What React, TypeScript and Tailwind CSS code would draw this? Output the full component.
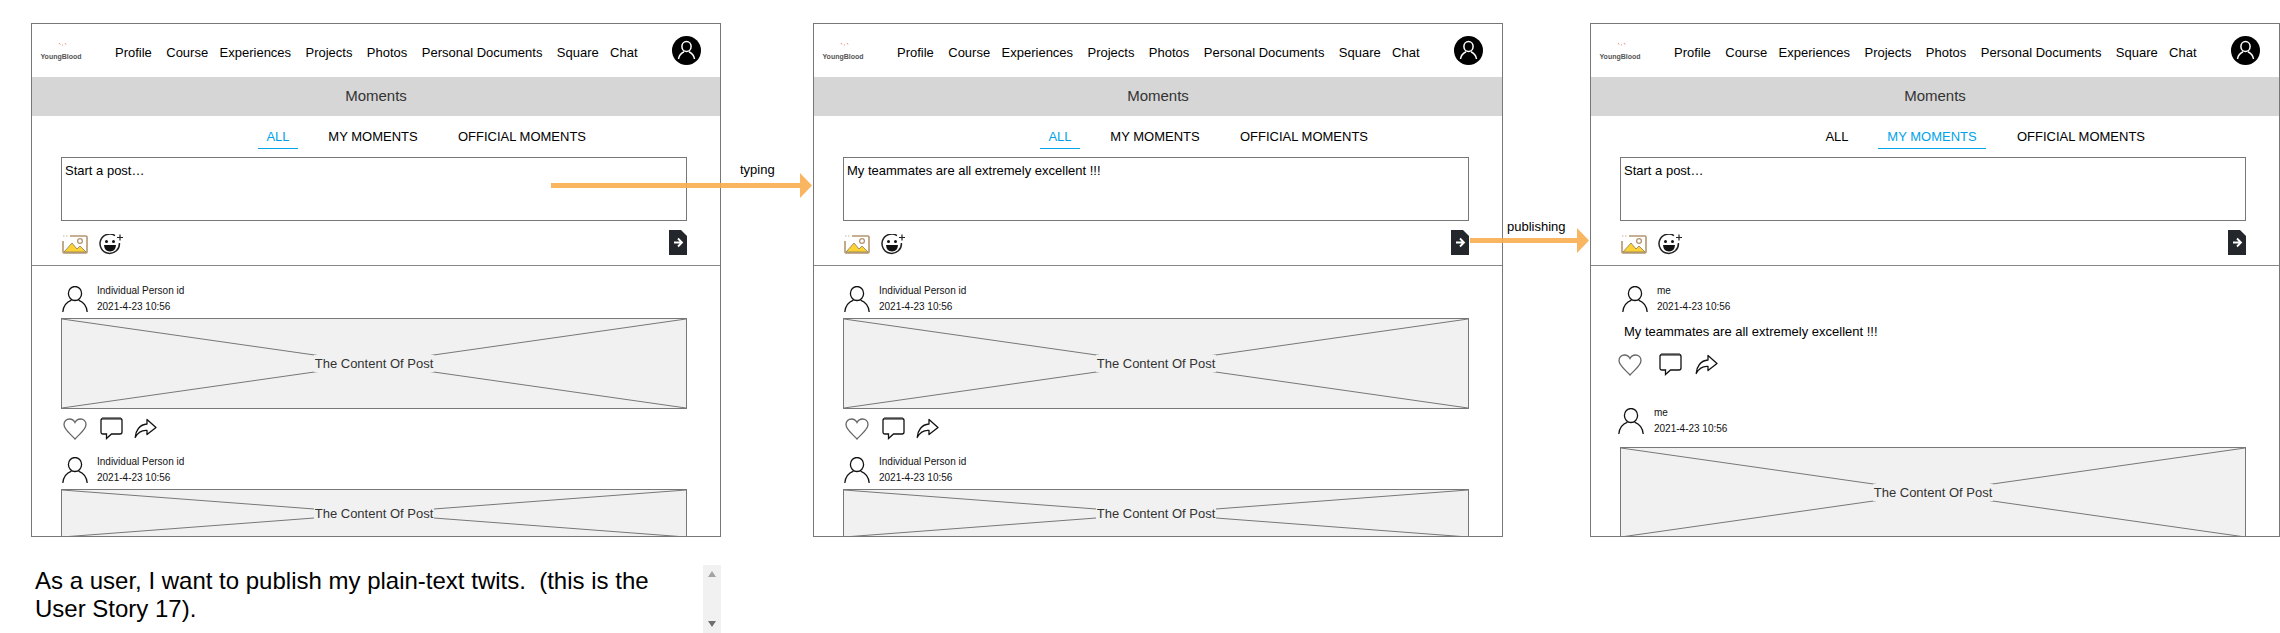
import React, { ReactNode } from 'react';

const NAV = [
  { label: 'Profile', cls: '' },
  { label: 'Course', cls: '' },
  { label: 'Experiences', cls: '-ml-[3px]' },
  { label: 'Projects', cls: '' },
  { label: 'Photos', cls: '' },
  { label: 'Personal Documents', cls: '' },
  { label: 'Square', cls: '' },
  { label: 'Chat', cls: '-ml-[3px]' },
];

const ImageIcon = () => (
  <svg width="26" height="20" viewBox="0 0 26 20" className="block">
    <path d="M1 7 L1 18 Q1 19 2 19 L24 19 Q25 19 25 18 L25 3 Q25 2 24 2 L8 2" fill="none" stroke="#b4956f" strokeWidth="1.6" />
    <path d="M1 2 H6" stroke="#c9b49a" strokeWidth="1" strokeDasharray="1.5 1.5" />
    <path d="M2 18 L10 9 L15 15 L18 12 L24 18 Z" fill="#fdd235" stroke="#8c7a55" strokeWidth="0.8" />
    <circle cx="18" cy="7" r="2.4" fill="none" stroke="#b4956f" strokeWidth="1.3" />
  </svg>
);

const SmileIcon = () => (
  <svg width="25" height="22" viewBox="0 0 25 22" className="block">
    <path d="M16 1.6 A9.7 9.7 0 1 0 20.4 9" fill="none" stroke="#222" strokeWidth="1.5" />
    <circle cx="7.5" cy="7.5" r="1.5" fill="#111" />
    <circle cx="14.5" cy="7.5" r="1.5" fill="#111" />
    <path d="M5 11 H17 Q16.5 17.5 11 17.5 Q5.5 17.5 5 11 Z" fill="#111" />
    <path d="M21 0.5 V6.5 M18 3.5 H24" stroke="#222" strokeWidth="1.2" />
  </svg>
);

const SendIcon = () => (
  <svg width="18" height="25" viewBox="0 0 18 25" className="block">
    <path d="M0 0 H12 L18 6 V25 H0 Z" fill="#23272b" />
    <path d="M5 12.5 H12.5 M9 8.5 L13 12.5 L9 16.5" fill="none" stroke="#fff" strokeWidth="1.8" />
  </svg>
);

const PersonIcon = () => (
  <svg width="26" height="26" viewBox="0 0 26 26" className="block shrink-0">
    <ellipse cx="13" cy="7.5" rx="6.6" ry="7" fill="none" stroke="#111" strokeWidth="1.3" />
    <path d="M0.8 26 C1.5 19 6 15.5 9.5 14.2 M16.5 14.2 C20 15.5 24.5 19 25.2 26" fill="none" stroke="#111" strokeWidth="1.3" />
  </svg>
);

const Avatar = () => (
  <svg width="29" height="29" viewBox="0 0 29 29" className="block shrink-0">
    <circle cx="14.5" cy="14.5" r="14.5" fill="#000" />
    <ellipse cx="14.5" cy="10.5" rx="4.6" ry="5" fill="none" stroke="#fff" strokeWidth="1.5" />
    <path d="M6.5 23 C7 19.5 9.5 17 12 15.8 M17 15.8 C19.5 17 22 19.5 22.5 23" fill="none" stroke="#fff" strokeWidth="1.5" />
  </svg>
);

const HeartIcon = () => (
  <svg width="24" height="22" viewBox="0 0 24 22" className="block">
    <path d="M12 21 C7 15.5 1 11.5 1 6.5 C1 3 3.5 1 6.5 1 C9 1 11 2.5 12 4.5 C13 2.5 15 1 17.5 1 C20.5 1 23 3 23 6.5 C23 11.5 17 15.5 12 21 Z" fill="none" stroke="#666" strokeWidth="1.3" />
  </svg>
);

const CommentIcon = () => (
  <svg width="23" height="23" viewBox="0 0 23 23" className="block">
    <path d="M3 1.5 H20 Q22 1.5 22 3.5 V15 Q22 17 20 17 H11.5 L6.5 21.5 V17 H3 Q1 17 1 15 V3.5 Q1 1.5 3 1.5 Z" fill="none" stroke="#111" strokeWidth="1.3" />
    <path d="M2 1.5 H21" stroke="#444" strokeWidth="2" />
  </svg>
);

const ShareIcon = () => (
  <svg width="23" height="21" viewBox="0 0 23 21" className="block">
    <path d="M13 1.5 L22 9.5 L13 16.5 V12.5 C8 12 4 14.5 1.2 19.5 C1.5 13 5.5 6.5 13 6 Z" fill="none" stroke="#111" strokeWidth="1.3" strokeLinejoin="round" />
  </svg>
);

const Logo = () => (
  <div className="w-[44px] ml-[7px] mt-[3px] flex flex-col items-center">
    <svg width="9" height="4" viewBox="0 0 9 4" className="block ml-[2px]">
      <path d="M1 1 L2 2.5 M4 3 L5 3 M7 1 L8 2.5" stroke="#f08a80" strokeWidth="1" />
    </svg>
    <span className="text-[7px] leading-[10px] font-bold text-[#555] mt-[6px] whitespace-nowrap">YoungBlood</span>
  </div>
);

const Tabs = ({ active }: { active: string }) => {
  const tabs = [
    { label: 'ALL', cls: 'w-[40px]' },
    { label: 'MY MOMENTS', cls: 'w-[108px]' },
    { label: 'OFFICIAL MOMENTS', cls: 'w-[148px]' },
  ];
  return (
    <div className="h-[41px] pl-[226px] flex gap-[21px] pt-[12px]">
      {tabs.map((tab) => (
        <div
          key={tab.label}
          className={`${tab.cls} h-[21px] text-center text-[13px] leading-[17px] whitespace-nowrap ${
            active === tab.label ? 'text-[#00a2e8] border-b border-[#00a2e8]' : 'text-black'
          }`}
        >
          {tab.label}
        </div>
      ))}
    </div>
  );
};

const Placeholder = ({ h, className = '', clipped = false }: { h: string; className?: string; clipped?: boolean }) => (
  <div className={`relative ${h} ${className} w-[626px] bg-[#f1f1f1] border-t border-x border-[#777] ${clipped ? '' : 'border-b'} flex items-center justify-center`}>
    <svg className="absolute inset-0 w-full h-full" viewBox="0 0 100 100" preserveAspectRatio="none">
      <path d="M0 0 L100 100 M100 0 L0 100" stroke="#777" strokeWidth="1" vectorEffect="non-scaling-stroke" fill="none" />
    </svg>
    <span className="relative bg-[#f1f1f1] text-[13px] leading-[17px] text-[#333] px-px whitespace-nowrap">The Content Of Post</span>
  </div>
);

const PostHead = ({ name, className = '', gap = 'gap-[9px]' }: { name: string; className?: string; gap?: string }) => (
  <div className={`flex items-center h-[32px] ${gap} ${className}`}>
    <PersonIcon />
    <div className="text-[10px] leading-[16px] text-[#111] whitespace-nowrap">
      <div>{name}</div>
      <div>2021-4-23 10:56</div>
    </div>
  </div>
);

const Actions = ({ className, gapOne, gapTwo }: { className: string; gapOne: string; gapTwo: string }) => (
  <div className={`flex items-center h-[23px] ${className}`}>
    <HeartIcon />
    <div className={gapOne}><CommentIcon /></div>
    <div className={gapTwo}><ShareIcon /></div>
  </div>
);

const Frame = ({ active, draft, className = '', children }: { active: string; draft: string; className?: string; children: ReactNode }) => (
  <div className={`w-[690px] h-[514px] shrink-0 border border-[#777] bg-white overflow-hidden ${className}`}>
    <div className="h-[53px] flex items-center relative">
      <Logo />
      <nav className="flex items-center gap-[14.4px] ml-[32px] mt-[5px] text-[13px] text-black whitespace-nowrap">
        {NAV.map((item) => (
          <span key={item.label} className={item.cls}>{item.label}</span>
        ))}
      </nav>
      <div className="absolute left-[640px] top-[12px]"><Avatar /></div>
    </div>
    <div className="h-[39px] -mx-px bg-[#d6d6d6] flex items-center justify-center text-[15px] text-[#333]">Moments</div>
    <Tabs active={active} />
    <div className="ml-[29px] w-[626px] h-[64px] border border-[#777] px-[3px] pt-[5px] text-[13px] leading-[16px] text-black">{draft}</div>
    <div className="h-[44px] ml-[30px] mr-[8px] relative flex items-start pt-[13px] gap-[11px]">
      <ImageIcon />
      <SmileIcon />
      <div className="absolute right-[25px] top-[9px]"><SendIcon /></div>
    </div>
    <div className="h-px -mx-px bg-[#888]" />
    {children}
  </div>
);

const Feed = () => (
  <div className="pt-[17px]">
    <PostHead name="Individual Person id" className="ml-[30px]" />
    <Placeholder h="h-[91px]" className="ml-[29px] mt-[3px]" />
    <Actions className="ml-[31px] mt-[8px]" gapOne="ml-[13px]" gapTwo="ml-[11px]" />
    <PostHead name="Individual Person id" className="ml-[30px] mt-[14px]" />
    <Placeholder h="h-[48px]" className="ml-[29px] mt-[3px]" clipped />
  </div>
);

const MyFeed = () => (
  <div className="pt-[17px]">
    <PostHead name="me" className="ml-[31px]" />
    <div className="ml-[33px] mt-[8px] text-[13px] leading-[17px] text-black">My teammates are all extremely excellent !!!</div>
    <Actions className="ml-[27px] mt-[13px]" gapOne="ml-[17px]" gapTwo="ml-[13px]" />
    <PostHead name="me" className="ml-[27px] mt-[29px]" gap="gap-[10px]" />
    <Placeholder h="h-[90px]" className="ml-[29px] mt-[10px]" clipped />
  </div>
);

const Arrow = ({ className }: { className: string }) => (
  <div className={`absolute flex items-center h-[25px] opacity-90 ${className}`}>
    <div className="flex-1 h-[5px] bg-[#f9ad4f]" />
    <svg width="12" height="25" viewBox="0 0 12 25" className="block shrink-0">
      <path d="M0 0 L12 12.5 L0 25 Z" fill="#f9ad4f" />
    </svg>
  </div>
);

export default function App() {
  return (
    <div className="relative w-[2280px] h-[633px] overflow-hidden bg-white font-['Liberation_Sans',Arial,sans-serif]">
      <div className="flex pl-[31px] pt-[23px]">
        <Frame active="ALL" draft="Start a post…"><Feed /></Frame>
        <Frame active="ALL" draft="My teammates are all extremely excellent !!!" className="ml-[92px]"><Feed /></Frame>
        <Frame active="MY MOMENTS" draft="Start a post…" className="ml-[87px]"><MyFeed /></Frame>
      </div>

      <div className="flex mt-[28px] pl-[35px]">
        <p className="w-[660px] pt-[2px] text-[24px] leading-[28px] text-black whitespace-pre-wrap">{'As a user, I want to publish my plain-text twits.  (this is the User Story 17).'}</p>
        <div className="ml-[8px] w-[18px] h-[68px] bg-[#f1f1f1] flex flex-col items-center justify-between py-[6px]">
          <svg width="8" height="6" viewBox="0 0 8 6"><path d="M4 0 L8 6 H0 Z" fill="#a3a3a3" /></svg>
          <svg width="8" height="6" viewBox="0 0 8 6"><path d="M0 0 H8 L4 6 Z" fill="#6f6f6f" /></svg>
        </div>
      </div>

      <Arrow className="left-[551px] top-[173px] w-[261px]" />
      <span className="absolute left-[740px] top-[161px] text-[13px] leading-[17px] text-black">typing</span>
      <Arrow className="left-[1470px] top-[228px] w-[119px]" />
      <span className="absolute left-[1507px] top-[218px] text-[13px] leading-[17px] text-black">publishing</span>
    </div>
  );
}
